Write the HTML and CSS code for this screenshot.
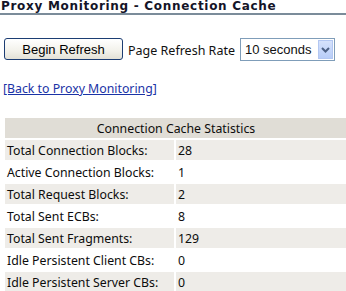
FILE: index.html
```html
<!DOCTYPE html>
<html>
<head>
    <title>Proxy Monitoring - Connection Cache</title>
    <link rel="stylesheet" href="styles.css">
</head>
<body>
    <h1 class="titulo">Proxy Monitoring - Connection Cache</h1>

    <form class="controle" onSubmit="return false;">
        <button type="button" class="botao">Begin Refresh</button>
        <span class="rotulo">Page Refresh Rate</span>
        <div class="seletor">
            <span class="valor">10 seconds</span>
            <span class="seta">
                <svg width="9" height="6" viewBox="0 0 9 6"><path d="M1 1 L4.5 4.5 L8 1" fill="none" stroke="#4d6185" stroke-width="2"/></svg>
            </span>
        </div>
    </form>

    <p class="voltar"><a href="#">[Back to Proxy Monitoring]</a></p>

    <table class="stats">
        <tr><th colspan="2">Connection Cache Statistics</th></tr>
        <tr class="par"><td class="nome">Total Connection Blocks:</td><td>28</td></tr>
        <tr><td class="nome">Active Connection Blocks:</td><td>1</td></tr>
        <tr class="par"><td class="nome">Total Request Blocks:</td><td>2</td></tr>
        <tr><td class="nome">Total Sent ECBs:</td><td>8</td></tr>
        <tr class="par"><td class="nome">Total Sent Fragments:</td><td>129</td></tr>
        <tr><td class="nome">Idle Persistent Client CBs:</td><td>0</td></tr>
        <tr class="par"><td class="nome">Idle Persistent Server CBs:</td><td>0</td></tr>
    </table>
</body>
</html>
```

FILE: styles.css
```css
body {
    margin: 0;
    background-color: white;
    font-family: "Noto Sans", sans-serif;
    font-size: 12px;
    color: #111;
    overflow: hidden;
}

.titulo {
    margin: 0;
    padding: 0 0 1px 1px;
    font-family: "DejaVu Sans", sans-serif;
    font-size: 12px;
    line-height: 12px;
    letter-spacing: 0.7px;
    color: #141428;
    border-bottom: 2px solid #7b8c9a;
}

.controle {
    display: flex;
    align-items: flex-end;
    margin: 23px 0 0 4px;
}

.botao {
    width: 119px;
    height: 22px;
    padding: 0;
    font-family: "Liberation Sans", sans-serif;
    font-size: 13px;
    color: black;
    background: linear-gradient(#ffffff, #f2f1ea 60%, #e3e1d6);
    border: 1px solid #1c3d73;
    border-radius: 3px;
}

.rotulo {
    margin: 0 5px 1px 5px;
    font-size: 12.5px;
    line-height: 16px;
}

.seletor {
    display: flex;
    align-items: center;
    width: 91px;
    height: 19px;
    border: 1px solid #7f9db9;
    padding: 1px;
    font-family: "Liberation Sans", sans-serif;
    font-size: 13px;
    margin-bottom: -1px;
}

.valor {
    flex: 1;
    padding-left: 3px;
}

.seta {
    display: flex;
    align-items: center;
    justify-content: center;
    width: 15px;
    height: 19px;
    background: linear-gradient(#d6e2fc, #b8cdf8);
    border: 1px solid #b3c7f2;
    box-sizing: border-box;
}

.voltar {
    margin: 22px 0 0 3px;
    font-size: 12.3px;
    line-height: 14px;
}

.voltar a {
    color: #1a33a6;
}

.stats {
    margin: 20px 0 0 3px;
    width: 346px;
    border-spacing: 2px;
    font-size: 12.3px;
    color: #0c0c0c;
}

.stats th {
    height: 20px;
    padding: 0;
    font-weight: normal;
    text-align: center;
    background-color: #e0ddd6;
}

.stats td {
    height: 20px;
    padding: 0 2px;
    white-space: nowrap;
}

.stats .nome {
    width: 165px;
}

.par td {
    background-color: #eeece8;
}
```
